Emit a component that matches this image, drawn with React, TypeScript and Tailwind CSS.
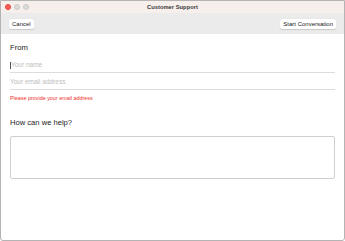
import React, { useState } from 'react';

function TrafficLights() {
  return (
    <div className="absolute left-[4px] top-[3px] flex gap-[3px]">
      <span className="w-[6px] h-[6px] rounded-full bg-[#fe5f57] border-[0.5px] border-[#e0443e]" />
      <span className="w-[6px] h-[6px] rounded-full bg-[#dcdcdc] border-[0.5px] border-[#c8c8c8]" />
      <span className="w-[6px] h-[6px] rounded-full bg-[#dcdcdc] border-[0.5px] border-[#c8c8c8]" />
    </div>
  );
}

export default function App() {
  const [name, setName] = useState('');
  const [email, setEmail] = useState('');
  const [message, setMessage] = useState('');

  return (
    <div
      className="w-[345px] h-[241px] bg-white border border-[#b4b4b4] rounded-b-[3px] flex flex-col overflow-hidden"
      style={{ fontFamily: '"Liberation Sans", Arial, sans-serif' }}
    >
      <div className="relative h-[12px] bg-[#f7efec] flex items-center justify-center shrink-0">
        <TrafficLights />
        <span className="text-[5.8px] font-bold text-[#3a3a3a]">Customer Support</span>
      </div>

      <div className="h-[21px] bg-[#ebebeb] flex items-center justify-between px-[8px] shrink-0">
        <button className="h-[10px] px-[3px] bg-white rounded-[2px] text-[6px] text-[#222] leading-none shadow-[0_0.5px_1px_rgba(0,0,0,0.15)]">
          Cancel
        </button>
        <button className="h-[10px] px-[3px] bg-white rounded-[2px] text-[6px] text-[#222] leading-none shadow-[0_0.5px_1px_rgba(0,0,0,0.15)]">
          Start Conversation
        </button>
      </div>

      <form className="flex-1 px-[9px] pt-[10px] flex flex-col">
        <h2 className="h-[8px] text-[7.7px] text-[#222] leading-[8px]">From</h2>

        <div className="mt-[9px] h-[12px] border-b-[1.5px] border-[#dcdcdc] pb-[3px] flex items-center">
          <span className="w-[0.5px] h-[7px] bg-[#555] mr-[0.5px]" />
          <input
            value={name}
            onChange={e => setName(e.target.value)}
            placeholder="Your name"
            className="flex-1 h-[8px] text-[6.5px] text-[#333] placeholder:text-[#bdbdbd] outline-none leading-[8px]"
          />
        </div>

        <div className="mt-[4.5px] h-[12px] border-b-[1.5px] border-[#dcdcdc] pb-[3px] flex items-center">
          <input
            value={email}
            onChange={e => setEmail(e.target.value)}
            placeholder="Your email address"
            className="w-full h-[8px] text-[6.5px] text-[#333] placeholder:text-[#bdbdbd] outline-none leading-[8px]"
          />
        </div>
        <p className="mt-[5px] h-[6px] text-[5.4px] text-[#f0302e] leading-[6px]">Please provide your email address</p>

        <h2 className="mt-[18px] h-[8px] text-[7.6px] text-[#222] leading-[8px]">How can we help?</h2>

        <textarea
          value={message}
          onChange={e => setMessage(e.target.value)}
          className="mt-[9px] h-[43px] w-full border border-[#cfcfcf] rounded-[2px] resize-none outline-none text-[6.5px]"
        />
      </form>
    </div>
  );
}
